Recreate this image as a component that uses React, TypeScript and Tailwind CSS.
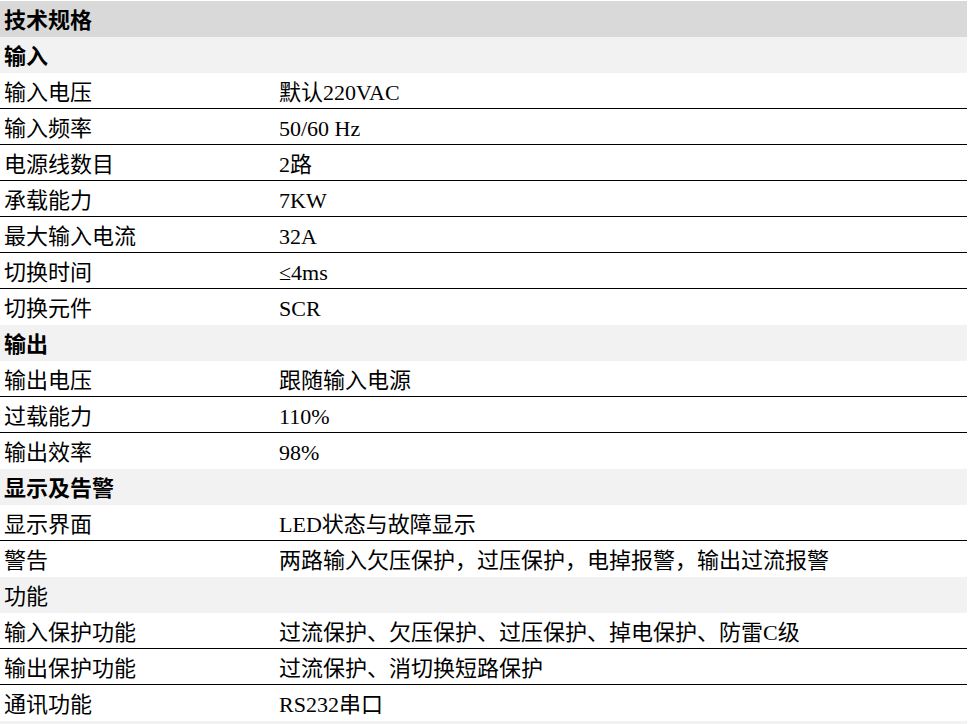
// spec table
type Row = { label: string; value?: string };
type Group = { title: string; bold: boolean; rows: Row[] };

const groups: Group[] = [
  {
    title: "输入",
    bold: true,
    rows: [
      { label: "输入电压", value: "默认220VAC" },
      { label: "输入频率", value: "50/60 Hz" },
      { label: "电源线数目", value: "2路" },
      { label: "承载能力", value: "7KW" },
      { label: "最大输入电流", value: "32A" },
      { label: "切换时间", value: "≤4ms" },
      { label: "切换元件", value: "SCR" },
    ],
  },
  {
    title: "输出",
    bold: true,
    rows: [
      { label: "输出电压", value: "跟随输入电源" },
      { label: "过载能力", value: "110%" },
      { label: "输出效率", value: "98%" },
    ],
  },
  {
    title: "显示及告警",
    bold: true,
    rows: [
      { label: "显示界面", value: "LED状态与故障显示" },
      { label: "警告", value: "两路输入欠压保护，过压保护，电掉报警，输出过流报警" },
    ],
  },
  {
    title: "功能",
    bold: false,
    rows: [
      { label: "输入保护功能", value: "过流保护、欠压保护、过压保护、掉电保护、防雷C级" },
      { label: "输出保护功能", value: "过流保护、消切换短路保护" },
      { label: "通讯功能", value: "RS232串口" },
    ],
  },
];

const App = () => {
  return (
    <div
      className="min-h-screen bg-white pt-px text-black text-[22px] leading-none"
      style={{ fontFamily: '"Liberation Serif", "Noto Sans CJK SC", serif' }}
    >
      <div className="w-[967px]">
        {/* 标题 */}
        <div className="h-[36px] flex items-center bg-[#d9d9d9] px-1 pt-1 font-bold">技术规格</div>

        {groups.map((group) => (
          <div key={group.title}>
            <div
              className={`h-[36px] flex items-center bg-[#f2f2f2] px-1 pt-1 ${group.bold ? "font-bold" : ""}`}
            >
              {group.title}
            </div>
            {group.rows.map((row, i) => (
              <div
                key={row.label}
                className={`h-[36px] flex items-center pt-1 ${
                  i < group.rows.length - 1 ? "border-b border-black" : ""
                }`}
              >
                <div className="w-[275px] pl-1">{row.label}</div>
                <div className="flex-1 pl-1 whitespace-pre">{row.value}</div>
              </div>
            ))}
          </div>
        ))}

        {/* 下一节 */}
        <div className="h-[36px] bg-[#f2f2f2]" />
      </div>
    </div>
  );
};

export default App;
